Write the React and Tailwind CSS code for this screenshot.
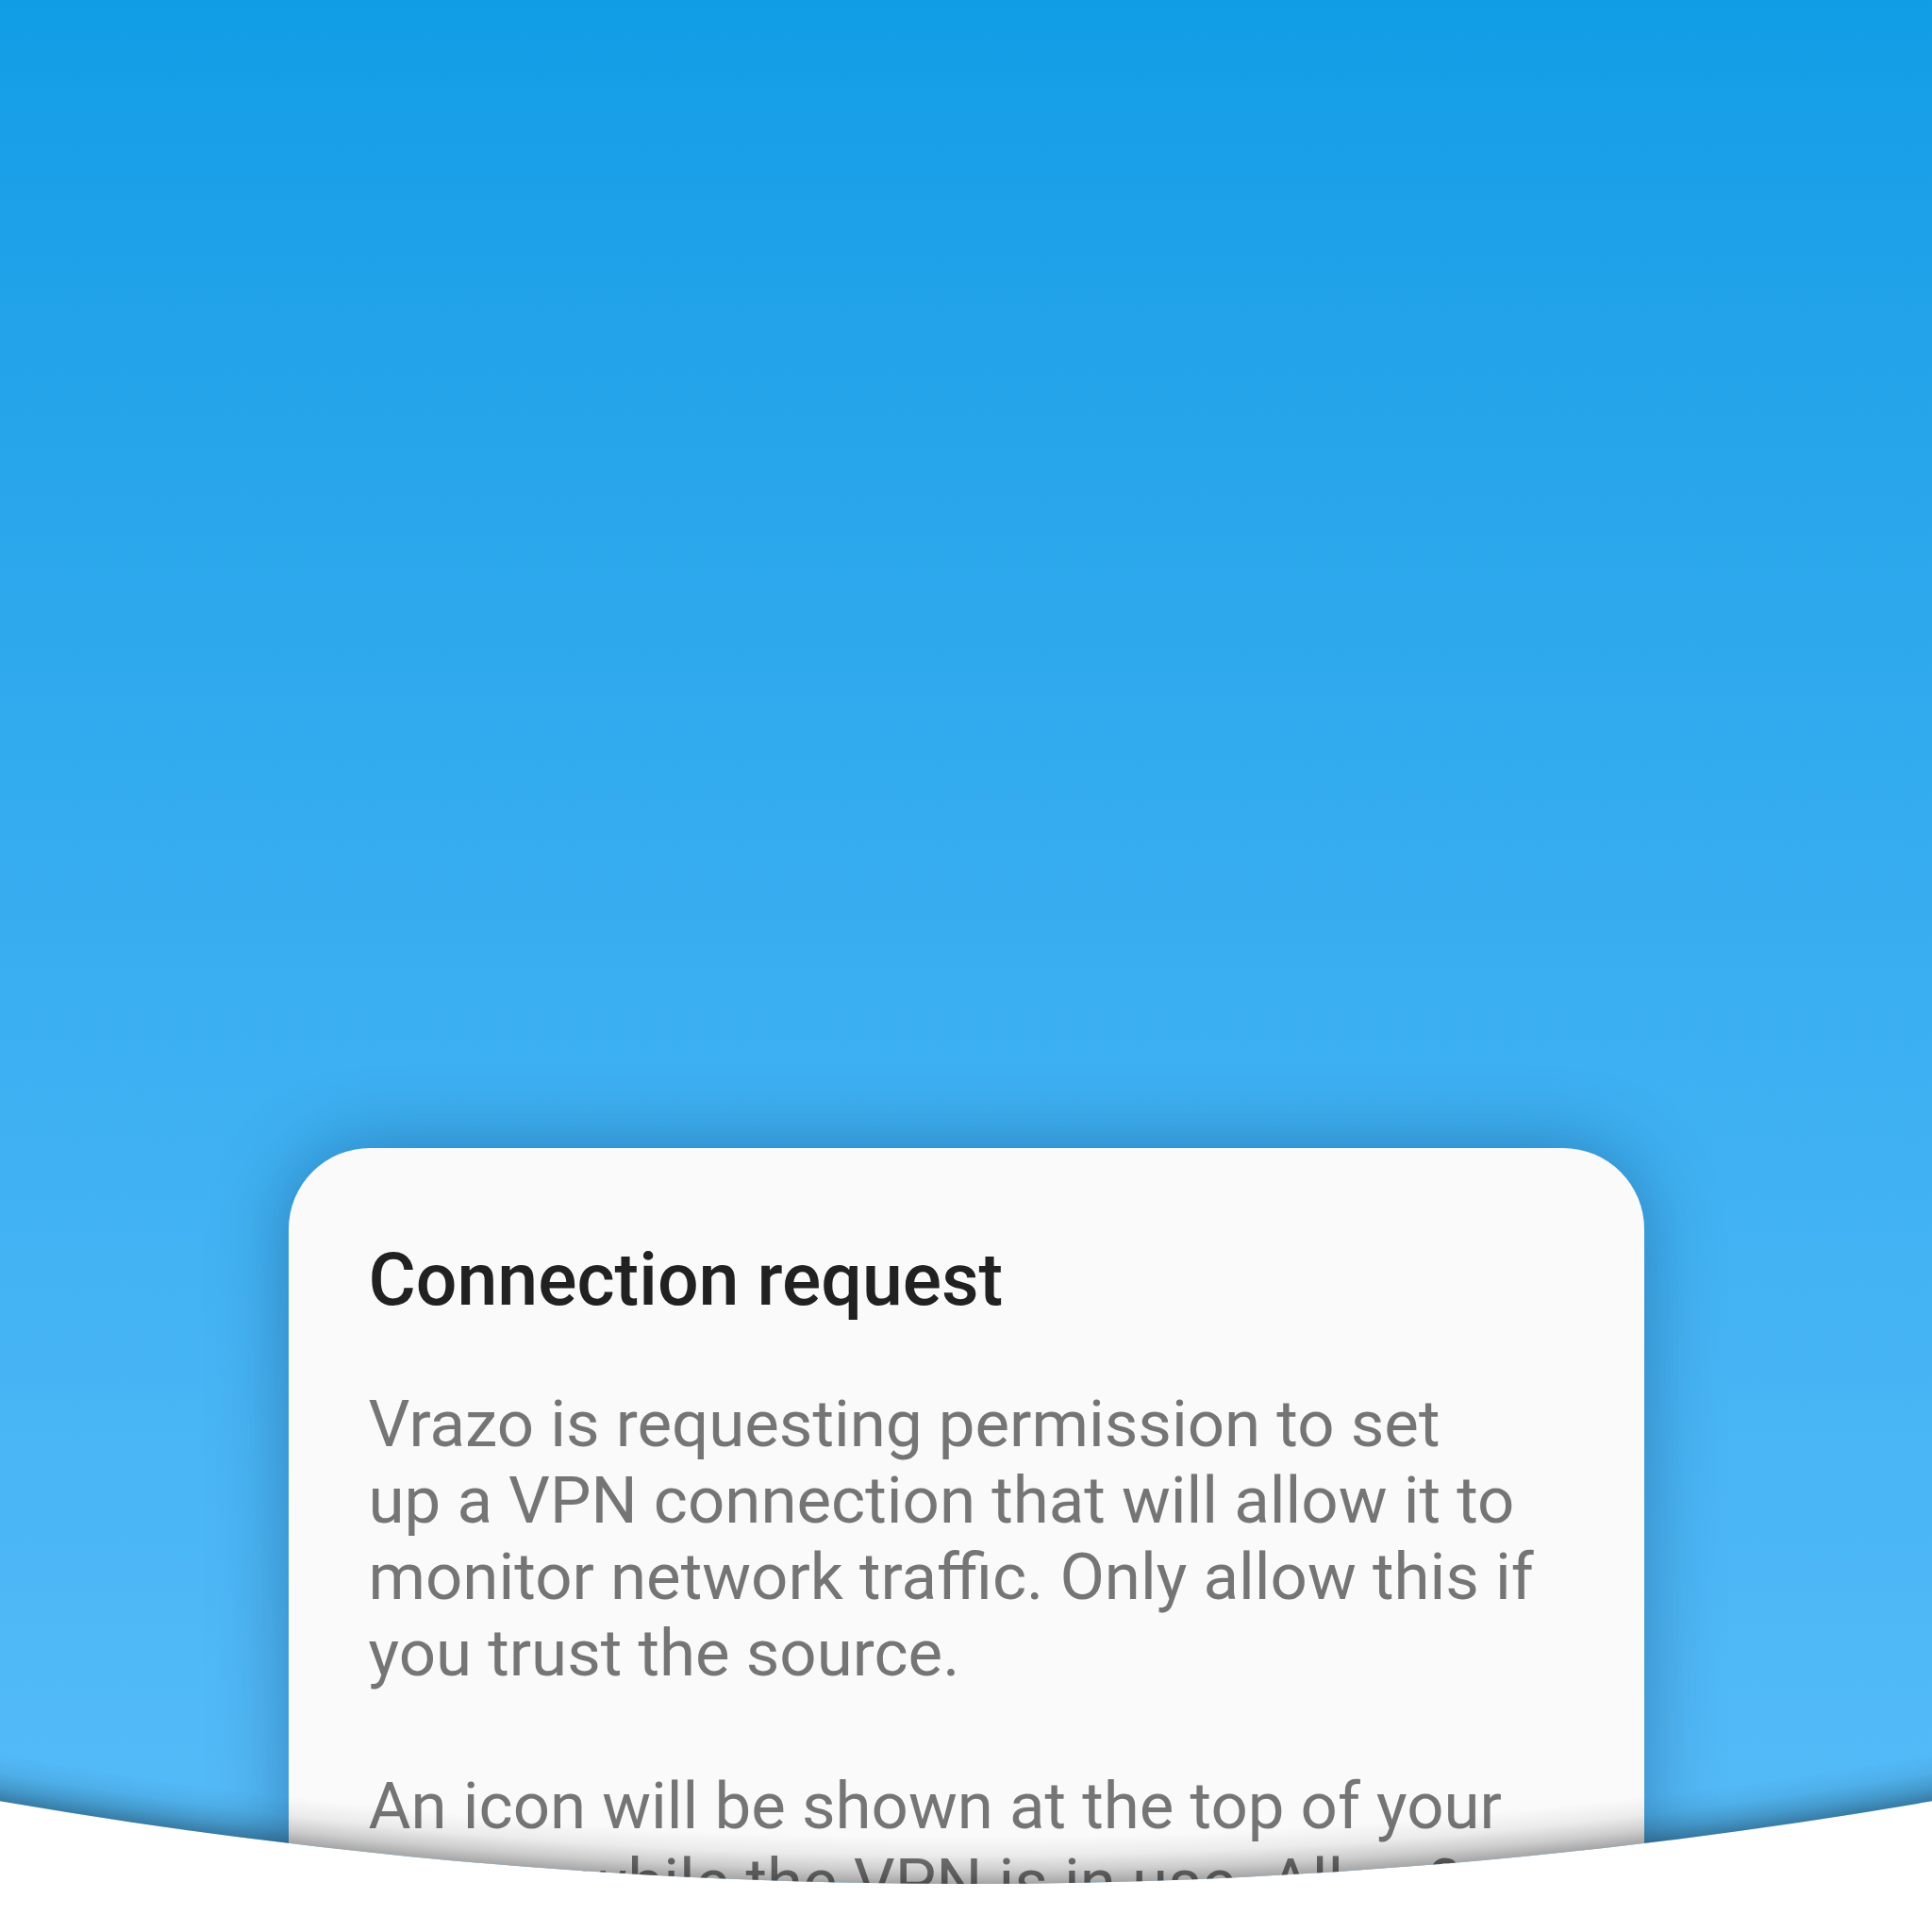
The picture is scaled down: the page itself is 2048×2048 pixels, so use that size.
export default function App() {
  return (
    <div className="relative w-[2048px] h-[2048px] overflow-hidden bg-white font-['Roboto',_'Noto_Sans',_sans-serif]">
      <div className="relative h-[2048px] overflow-hidden bg-gradient-to-b from-[#109de6] via-[#3cb0f2] via-55% to-[#57bcf9] [clip-path:circle(6026px_at_1024px_-4029px)]">
        <div className="flex flex-col items-center pt-[1217px]">
          <div className="w-[1437px] min-h-[900px] bg-[#fafafa] rounded-t-[86px] shadow-[0_0_80px_rgba(0,30,70,0.35)] px-[85px] pt-[94px]">
            <h1 className="text-[77px] leading-[92px] font-medium text-[#212121] whitespace-nowrap">
              Connection request
            </h1>
            <p className="mt-[66px] text-[69px] leading-[81px] text-[#757575] whitespace-nowrap">
              Vrazo is requesting permission to set
              <br />
              up a VPN connection that will allow it to
              <br />
              monitor network traffic. Only allow this if
              <br />
              you trust the source.
            </p>
            <p className="mt-[81px] text-[69px] leading-[81px] text-[#757575] whitespace-nowrap">
              An icon will be shown at the top of your
              <br />
              screen while the VPN is in use. Allow?
            </p>
          </div>
        </div>
        <div className="absolute inset-0 pointer-events-none bg-[radial-gradient(circle_6026px_at_1024px_-4029px,rgba(0,0,0,0)_5976px,rgba(0,0,0,0.06)_5996px,rgba(0,0,0,0.18)_6012px,rgba(0,0,0,0.34)_6026px)]" />
      </div>
    </div>
  );
}
